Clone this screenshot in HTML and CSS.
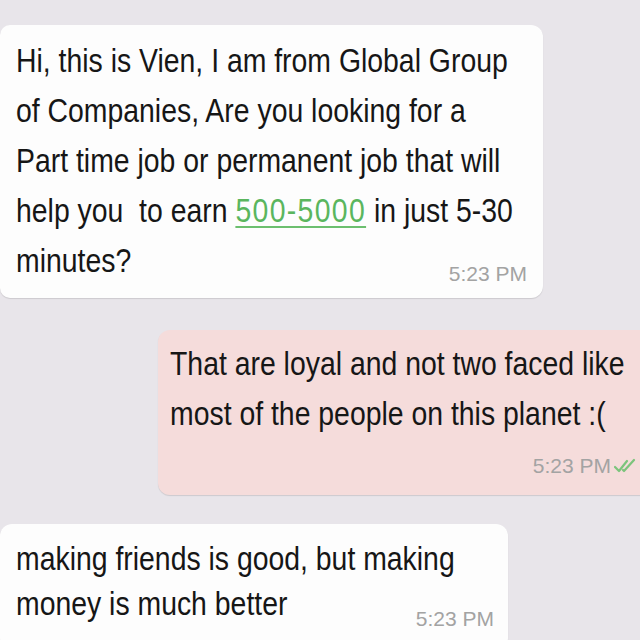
FILE: index.html
```html
<!DOCTYPE html>
<html lang="en">
<head>
<meta charset="utf-8">
<title>Chat</title>
<link rel="stylesheet" href="styles.css">
</head>
<body>
<main class="chat">
  <div class="bubble in first">
    <p class="msg">Hi, this is Vien, I am from Global Group<br>of Companies, Are you looking for a<br>Part time job or permanent job that will<br>help you &nbsp;to earn <span class="link">500-5000</span> in just 5-30<br>minutes?</p>
    <div class="meta overlap-1"><span class="time">5:23 PM</span></div>
  </div>
  <div class="bubble out">
    <p class="msg">That are loyal and not two faced like<br>most of the people on this planet :(</p>
    <div class="meta below">
      <span class="time">5:23 PM</span>
      <svg class="ticks" width="24" height="16" viewBox="0 0 24 16" aria-hidden="true">
        <path d="M1 9 L5 13 L13 3" fill="none" stroke="#7cc47c" stroke-width="2.2" stroke-linecap="round" stroke-linejoin="round"/>
        <path d="M9 12 L10 13 L20 2" fill="none" stroke="#7cc47c" stroke-width="2.2" stroke-linecap="round" stroke-linejoin="round"/>
      </svg>
    </div>
  </div>
  <div class="bubble in third">
    <p class="msg tight">making friends is good, but making<br>money is much better</p>
    <div class="meta overlap-3"><span class="time">5:23 PM</span></div>
  </div>
</main>
</body>
</html>
```
FILE: styles.css
```css
html, body {
  margin: 0;
  padding: 0;
}
body {
  width: 640px;
  height: 640px;
  overflow: hidden;
  background: #e8e5ea;
  font-family: "Liberation Sans", Arial, sans-serif;
  color: #161616;
}
.chat {
  display: flex;
  flex-direction: column;
  align-items: flex-start;
}
.bubble {
  box-sizing: border-box;
  display: flow-root;
  border-radius: 12px;
  box-shadow: 0 1px 1px rgba(0, 0, 0, 0.12);
}
.in {
  background: #fdfdfd;
}
.first {
  width: 543px;
  margin-top: 25px;
  padding: 10px 16px 13px 16px;
  border-radius: 10px 12px 12px 10px;
}
.out {
  width: 500px;
  margin-top: 32px;
  margin-left: 158px;
  padding: 8px 20px 18px 12px;
  background: #f5dcdb;
}
.third {
  width: 508px;
  margin-top: 29px;
  padding: 12px 14px 20px 16px;
}
.msg {
  margin: 0;
  font-size: 34px;
  line-height: 50px;
  white-space: nowrap;
  transform: scaleX(0.835);
  transform-origin: left center;
}
.msg.tight {
  line-height: 45px;
}
.link {
  color: #5ab65e;
  letter-spacing: 1.6px;
  text-decoration: underline;
  text-decoration-color: #6cbf6f;
  text-decoration-thickness: 2px;
  text-underline-offset: 4px;
}
.meta {
  display: flex;
  justify-content: flex-end;
  align-items: center;
  gap: 3px;
}
.overlap-1 {
  margin-top: -22px;
}
.overlap-3 {
  margin-top: -18px;
}
.below {
  margin-top: 17px;
}
.time {
  font-size: 21px;
  line-height: 22px;
  color: #a3a3a3;
}
.ticks {
  display: block;
}
```
